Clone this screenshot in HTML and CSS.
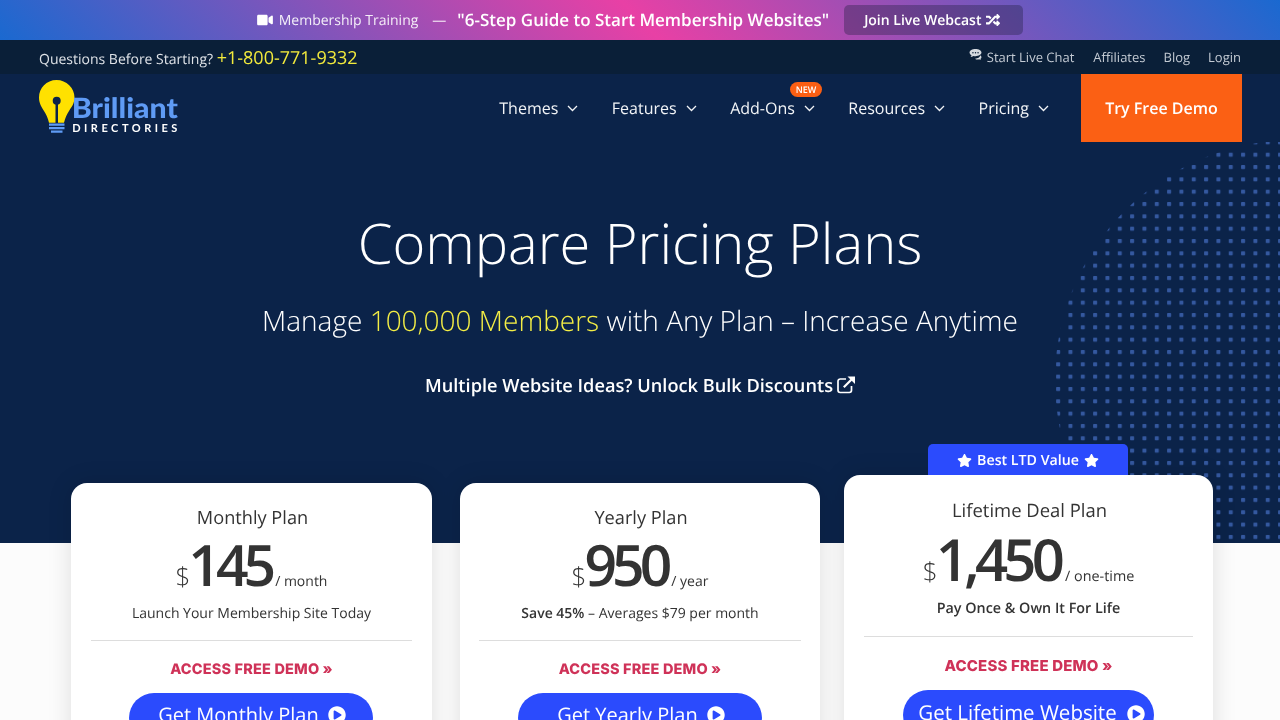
FILE: index.html
```html
<!DOCTYPE html>
<html lang="en">
<head>
<meta charset="utf-8">
<title>Compare Pricing Plans</title>
<link rel="stylesheet" href="styles.css">
</head>
<body>
<svg class="defs" width="0" height="0" aria-hidden="true">
  <symbol id="i-video" viewBox="0 0 576 512"><path d="M336.2 64H47.8C21.4 64 0 85.4 0 111.8v288.4C0 426.6 21.4 448 47.8 448h288.4c26.4 0 47.8-21.4 47.8-47.8V111.8c0-26.4-21.4-47.8-47.8-47.8zm189.4 37.7L416 177.3v157.4l109.6 75.5c21.2 14.6 50.4-.3 50.4-25.8V127.5c0-25.4-29.1-40.4-50.4-25.8z"/></symbol>
  <symbol id="i-random" viewBox="0 0 512 512"><path d="M504.971 359.029c9.373 9.373 9.373 24.569 0 33.941l-80 79.984c-15.01 15.01-40.971 4.49-40.971-16.971V416h-58.785a12.004 12.004 0 0 1-8.773-3.812l-70.556-75.596 53.333-57.143L352 336h32v-39.981c0-21.438 25.943-31.998 40.971-16.971l80 79.981zM12 176h84l52.781 56.551 53.333-57.143-70.556-75.596A11.999 11.999 0 0 0 122.785 96H12c-6.627 0-12 5.373-12 12v56c0 6.627 5.373 12 12 12zm372 0v39.984c0 21.46 25.961 31.98 40.971 16.971l80-79.984c9.373-9.373 9.373-24.569 0-33.941l-80-79.981C409.943 24.021 384 34.582 384 56.019V96h-58.785a12.004 12.004 0 0 0-8.773 3.812L96 336H12c-6.627 0-12 5.373-12 12v56c0 6.627 5.373 12 12 12h110.785c3.326 0 6.503-1.381 8.773-3.812L352 176h32z"/></symbol>
  <symbol id="i-star" viewBox="0 0 576 512"><path d="M259.3 17.8L194 150.2 47.9 171.5c-26.2 3.8-36.7 36.1-17.7 54.6l105.7 103-25 145.5c-4.5 26.3 23.2 46 46.4 33.7L288 439.6l130.7 68.7c23.2 12.2 50.9-7.4 46.4-33.7l-25-145.5 105.7-103c19-18.5 8.5-50.8-17.7-54.6L382 150.2 316.7 17.8c-11.7-23.6-45.6-23.9-57.4 0z"/></symbol>
  <symbol id="i-play" viewBox="0 0 512 512"><path d="M256 8C119 8 8 119 8 256s111 248 248 248 248-111 248-248S393 8 256 8zm115.7 272l-176 101c-15.8 8.8-35.7-2.5-35.7-21V152c0-18.4 19.8-29.8 35.7-21l176 107c16.4 9.2 16.4 32.9 0 42z"/></symbol>
  <symbol id="i-chev" viewBox="0 0 11 7"><path d="M1 1l4.500 4.500L10 1" fill="none" stroke="currentColor" stroke-width="1.300"/></symbol>
</svg>

<div class="promo">
  <svg class="ic ic-video"><use href="#i-video"/></svg>
  <span class="promo-label">Membership Training</span>
  <span class="promo-dash">—</span>
  <strong class="promo-title">"6-Step Guide to Start Membership Websites"</strong>
  <a class="promo-btn"><span>Join Live Webcast</span> <svg class="ic ic-random"><use href="#i-random"/></svg></a>
</div>

<div class="topbar">
  <div class="top-q">Questions Before Starting? <span class="phone">+1-800-771-9332</span></div>
  <nav class="top-links">
    <a class="chat">
      <svg class="ic-chat" viewBox="0 0 14 12"><path d="M7 0c3.600 0 6.500 1.700 6.500 3.900S10.600 7.800 7 7.800c-.8 0-1.500-.1-2.200-.2C3.800 8.400 2.600 8.800 1.500 8.800c.6-.6 1-1.300 1.100-2C1.300 6.100.5 5.100.5 3.900.5 1.700 3.400 0 7 0Z"/><path d="M12.500 6.900c.6.600 1 1.300 1 2 0 .8-.5 1.500-1.200 2 .1.500.4.800.7 1.100-.7 0-1.500-.3-2-.7-.5.100-1 .2-1.500.2-1.300 0-2.400-.4-3.100-1 3 .1 5.300-1.400 6.100-3.600Z"/><g class="chat-dots"><circle cx="4.200" cy="4" r=".8"/><circle cx="7" cy="4" r=".8"/><circle cx="9.800" cy="4" r=".8"/></g></svg>
      Start Live Chat</a>
    <a>Affiliates</a>
    <a>Blog</a>
    <a>Login</a>
  </nav>
</div>

<header class="mainnav">
  <a class="logo" aria-label="Brilliant Directories">
    <svg width="140" height="54" viewBox="0 0 140 54">
      <path class="bulb" d="M17.500 0C7.500 0 0 8 0 17.500c0 6 2.600 9.600 5 13.400 2 3.200 4 7 5 11.800h15c1-4.800 3-8.600 5-11.800 2-3.200 5.500-7 5.500-13.400C35.500 8 27.500 0 17.500 0Z"/>
      <rect class="fil" x="16.500" y="20" width="2.500" height="23"/>
      <circle class="fil" cx="17.700" cy="20.700" r="4"/>
      <path class="stripes" d="M10 43.500h15.500v2.300H10zM10 47h15.500v2.300H10zM12 50.500h11.500v2.300H12z"/>
      <text class="logo-b" x="32.800" y="38" textLength="106" lengthAdjust="spacingAndGlyphs">Brilliant</text>
      <text class="logo-d" x="33.200" y="52" textLength="105.200">DIRECTORIES</text>
    </svg>
  </a>
  <nav class="menu">
    <a>Themes <svg class="chev"><use href="#i-chev"/></svg></a>
    <a>Features <svg class="chev"><use href="#i-chev"/></svg></a>
    <a class="has-badge">Add-Ons <svg class="chev"><use href="#i-chev"/></svg><span class="badge">NEW</span></a>
    <a>Resources <svg class="chev"><use href="#i-chev"/></svg></a>
    <a>Pricing <svg class="chev"><use href="#i-chev"/></svg></a>
  </nav>
  <a class="cta">Try Free Demo</a>
</header>

<main>
  <section class="hero">
    <svg class="dots" width="240" height="401" aria-hidden="true">
      <defs>
        <pattern id="dotgrid" x="3.800" y="10.700" width="12.330" height="12.330" patternUnits="userSpaceOnUse">
          <rect width="4" height="4" rx=".8"/>
        </pattern>
        <clipPath id="dotclip"><circle cx="255" cy="238" r="240"/></clipPath>
      </defs>
      <rect width="240" height="401" fill="url(#dotgrid)" clip-path="url(#dotclip)"/>
    </svg>
    <h1>Compare Pricing Plans</h1>
    <p class="sub">Manage <span class="hl">100,000 Members</span> with Any Plan – Increase Anytime</p>
    <a class="bulk">Multiple Website Ideas? Unlock Bulk Discounts
      <svg class="ic-ext" viewBox="0 0 18 18"><path d="M14.500 10v4.300a2.200 2.200 0 0 1-2.200 2.200H3.200A2.200 2.200 0 0 1 1 14.300V5.200A2.200 2.200 0 0 1 3.200 3H9" fill="none" stroke="currentColor" stroke-width="1.700"/><path d="M6.800 11.200 15 3" fill="none" stroke="currentColor" stroke-width="2.200"/><path d="M10.500.5H18V8Z" fill="currentColor"/></svg>
    </a>
  </section>

  <section class="plans">
    <article class="card card-m">
      <h2>Monthly Plan</h2>
      <div class="price"><span class="cur">$</span><span class="amt">145</span><span class="per">/ month</span></div>
      <p class="note">Launch Your Membership Site Today</p>
      <a class="demo">ACCESS FREE DEMO »</a>
      <a class="get">Get Monthly Plan <svg class="ic-play"><use href="#i-play"/></svg></a>
    </article>
    <article class="card card-y">
      <h2>Yearly Plan</h2>
      <div class="price"><span class="cur">$</span><span class="amt">950</span><span class="per">/ year</span></div>
      <p class="note"><b>Save 45%</b> – Averages $79 per month</p>
      <a class="demo">ACCESS FREE DEMO »</a>
      <a class="get">Get Yearly Plan <svg class="ic-play"><use href="#i-play"/></svg></a>
    </article>
    <article class="card card-l">
      <div class="ribbon"><svg class="ic-star"><use href="#i-star"/></svg> Best LTD Value <svg class="ic-star"><use href="#i-star"/></svg></div>
      <h2>Lifetime Deal Plan</h2>
      <div class="price"><span class="cur">$</span><span class="amt">1,450</span><span class="per">/ one-time</span></div>
      <p class="note"><b>Pay Once &amp; Own It For Life</b></p>
      <a class="demo">ACCESS FREE DEMO »</a>
      <a class="get">Get Lifetime Website <svg class="ic-play"><use href="#i-play"/></svg></a>
    </article>
  </section>
</main>
</body>
</html>
```

FILE: styles.css
```css
* { box-sizing: border-box; }
html, body { margin: 0; height: 720px; overflow: hidden; }
body { font-family: "Open Sans", sans-serif; background: #fcfcfc; color: #333; text-rendering: geometricPrecision; will-change: transform; }
a { color: inherit; text-decoration: none; }
.defs { position: absolute; }

.ic { fill: currentColor; display: inline-block; }
.promo { height: 40px; display: flex; align-items: center; justify-content: center; color: #fff;
  background: linear-gradient(45deg, #1a69d0 0%, #e840a5 50%, #1a69d0 100%); }
.ic-video { width: 16px; height: 14px; margin-right: 6px; }
.promo-label { font-size: 14px; opacity: .9; }
.promo-dash { font-size: 14px; margin: 0 11px 0 14px; opacity: .9; }
.promo-title { font-size: 17px; font-weight: 600; margin-bottom: 2px; }
.promo-btn { margin-left: 15px; width: 179px; height: 30px; padding-right: 3px; border-radius: 5px; background: rgba(30, 30, 60, .35);
  font-size: 14px; font-weight: 600; display: flex; align-items: center; justify-content: center; gap: 5px; }
.ic-random { width: 14px; height: 14px; }

.topbar { height: 34px; background: #0a1f38; display: flex; justify-content: space-between; padding: 0 39px; color: #dfe3e8; }
.top-q { font-size: 14px; line-height: 36px; }
.phone { font-size: 18px; color: #f2ea3c; }
.top-links { display: flex; gap: 18px; font-size: 13px; line-height: 34px; color: #c3cad3; }
.chat { display: flex; align-items: center; gap: 5px; margin-right: 1px; }
.ic-chat { width: 13px; height: 11px; fill: #d5dae0; margin-top: -5px; }
.chat-dots { fill: #0a1f38; }

.mainnav { height: 68px; background: #0b2349; display: flex; align-items: stretch; padding: 0 38px 0 39px; color: #f2f4f7; }
.logo { display: block; margin-top: 6px; height: 54px; }
.logo svg { overflow: visible; }
.bulb { fill: #ffe100; }
.fil { fill: #0b2349; }
.stripes { fill: #5f9bf5; }
.logo-b { font-family: "Lato", sans-serif; font-weight: 900; font-size: 28px; fill: #5f9bf5; }
.logo-d { font-family: "Lato", sans-serif; font-weight: 700; font-size: 11px; fill: #fff; }
.menu { margin-left: auto; display: flex; align-items: center; gap: 33.500px; font-size: 16px; margin-right: 32px; }
.menu a { display: flex; align-items: center; gap: 9px; position: relative; }
.chev { width: 11px; height: 7px; }
.badge { position: absolute; right: -7px; top: -15px; height: 15px; padding: 0 5.500px; border-radius: 8px; background: #fb5f13; color: #fff; font-size: 9px; font-weight: 600; line-height: 15px; }
.cta { width: 161px; background: #fb6014; color: #fff; font-size: 16px; font-weight: 600; display: flex; align-items: center; justify-content: center; }

.hero { position: relative; height: 401px; background: #0b2349; color: #fff; text-align: center; padding-top: 60px; overflow: hidden; }
.dots { position: absolute; right: 0; top: 0; fill: #34589f; }
.hero h1 { position: relative; margin: 0; font-size: 56px; font-weight: 300; line-height: 82px; }
.sub { position: relative; margin: 17px 0 0; font-size: 28px; font-weight: 300; line-height: 40px; }
.hl { color: #f4ee45; }
.bulk { position: relative; display: inline-flex; align-items: center; gap: 4px; margin-top: 32px; font-size: 18.200px; font-weight: 600; line-height: 26px; }
.ic-ext { width: 18px; height: 18px; margin-top: -3px; }

.plans { display: flex; align-items: flex-start; padding-left: 71px; margin-top: -60px; position: relative; }
.card { position: relative; background: #fff; border-radius: 16px; box-shadow: 0 0 24px rgba(0, 0, 0, .13); text-align: center; height: 320px; padding-top: 21px; }
.card-m { width: 361px; margin-right: 28px; }
.card-y { width: 360px; margin-right: 24px; }
.card-l { width: 369px; margin-top: -8px; }
.card h2 { margin: 0; padding-left: 2px; font-size: 18.200px; font-weight: 400; line-height: 28px; }
.price { display: flex; justify-content: center; align-items: baseline; margin-top: 6px; height: 52px; line-height: 52px; }
.cur { font-size: 26px; font-weight: 300; margin-right: -2px; }
.amt { font-size: 57px; font-weight: 600; letter-spacing: -5px; }
.per { font-size: 14px; margin-left: 4px; }
.note { margin: 14px 19px 0; padding-bottom: 16px; border-bottom: 1px solid #ddd; font-size: 14px; line-height: 20px; }
.card-m .note { margin-left: 20px; margin-right: 20px; }
.note b { font-weight: 600; }
.demo { display: block; margin-top: 19px; font-family: "Inter", sans-serif; font-weight: 800; font-size: 14.500px; letter-spacing: .17px; line-height: 20px; color: #cf3258; }
.get { display: inline-flex; align-items: flex-start; justify-content: center; gap: 9px; margin-top: 13px; width: 244px; height: 50px; padding: 8px 0 0 2px; border-radius: 25px; background: #2b4bfd; color: #fff; font-size: 20px; line-height: 27px; white-space: nowrap; }
.card-m .get { margin-left: -1px; }
.ic-play { width: 18px; height: 18px; fill: #fff; margin-top: 5px; }
.ribbon { position: absolute; left: 84px; top: -31px; width: 200px; height: 31px; padding-top: 1px; border-radius: 5px 5px 0 0; background: #2b4bfd; color: #fff; font-size: 14.200px; font-weight: 600; display: flex; align-items: center; justify-content: center; gap: 5px; }
.ic-star { width: 15px; height: 13px; fill: #fff; }
.card-l { padding-top: 22px; }
.card-l h2 { font-size: 18.450px; }
.card-l .price { margin-top: 8px; }
.card-l .amt { font-size: 58px; letter-spacing: -4.800px; }
.card-l .per { font-size: 14.350px; margin-left: 5px; }
.card-l .note { margin: 14px 20px 0; padding-bottom: 17px; font-size: 14.350px; }
.card-l .demo { margin-top: 19px; font-size: 15px; }
.card-l .get { margin-top: 14px; width: 251px; padding: 10px 0 0 6px; gap: 10px; font-size: 20.500px; }
```
